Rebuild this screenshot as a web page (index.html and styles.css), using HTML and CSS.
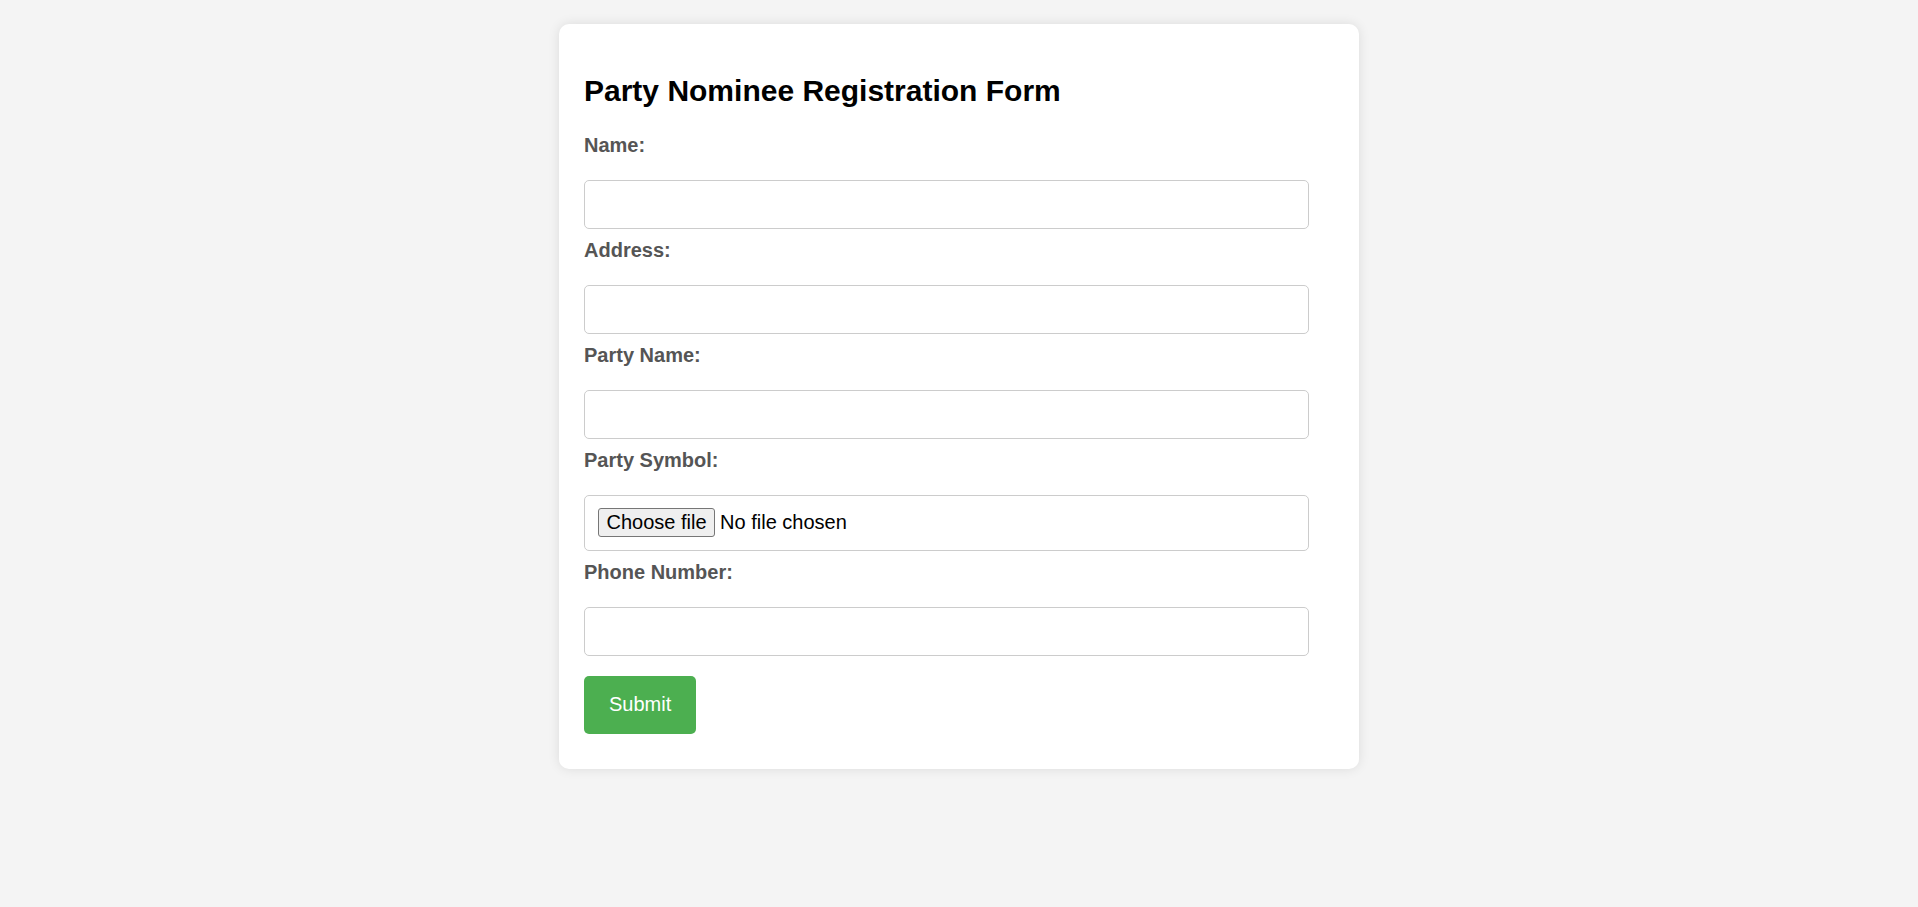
FILE: index.html
```html
<!DOCTYPE html>
<html lang="en">
<head>
<meta charset="utf-8">
<title>Party Nominee Registration Form</title>
<link rel="stylesheet" href="styles.css">
</head>
<body>
<div class="container">
  <h2 class="title">Party Nominee Registration Form</h2>
  <form class="form">
    <label class="label" for="name">Name:</label>
    <input class="field" type="text" id="name">
    <label class="label" for="address">Address:</label>
    <input class="field" type="text" id="address">
    <label class="label" for="party">Party Name:</label>
    <input class="field" type="text" id="party">
    <label class="label" for="symbol">Party Symbol:</label>
    <div class="field file">
      <input class="file-input" type="file" id="symbol">
      <label class="file-btn" for="symbol">Choose file</label>
      <span class="file-name">No file chosen</span>
    </div>
    <label class="label" for="phone">Phone Number:</label>
    <input class="field" type="tel" id="phone">
    <button class="submit" type="submit">Submit</button>
  </form>
</div>
</body>
</html>
```
FILE: styles.css
```css
html, body {
  margin: 0;
}
body {
  background: #f4f4f4;
  padding: 24px 0 25px;
  font-family: "Liberation Sans", Arial, sans-serif;
}
.container {
  width: 800px;
  box-sizing: border-box;
  margin: 0 auto;
  background: #fff;
  padding: 25px;
  border-radius: 10px;
  box-shadow: 0 0 12px rgba(0, 0, 0, 0.1);
}
.title {
  font-size: 30px;
  font-weight: bold;
  color: #000;
  margin: 25px 0;
  line-height: 34.5px;
}
.form {
  margin: 0;
}
.label {
  display: block;
  font-size: 20px;
  line-height: 23px;
  font-weight: bold;
  color: #555;
  margin-bottom: 23px;
}
.field {
  display: block;
  box-sizing: border-box;
  width: 725px;
  height: 49px;
  margin: 0 0 10px;
  padding: 12.5px;
  border: 1px solid #ccc;
  border-radius: 5px;
  font-family: "Liberation Sans", Arial, sans-serif;
  font-size: 20px;
  background: #fff;
  color: #000;
  outline: none;
}
.file {
  display: flex;
  align-items: center;
  height: 56px;
  padding: 12.5px 13px;
}
.file-input {
  display: none;
}
.file-btn {
  box-sizing: border-box;
  display: flex;
  align-items: center;
  height: 29px;
  padding: 0 7.5px;
  margin-right: 5px;
  border: 1px solid #767676;
  border-radius: 3px;
  background: #efefef;
  color: #000;
  font-size: 20px;
  cursor: default;
}
.file-name {
  font-size: 20px;
  color: #000;
}
.submit {
  display: block;
  height: 58px;
  margin: 20px 0 10px;
  padding: 0 25px;
  border: none;
  border-radius: 5px;
  background: #4caf50;
  color: #fff;
  font-family: "Liberation Sans", Arial, sans-serif;
  font-size: 20px;
  cursor: pointer;
}
```
